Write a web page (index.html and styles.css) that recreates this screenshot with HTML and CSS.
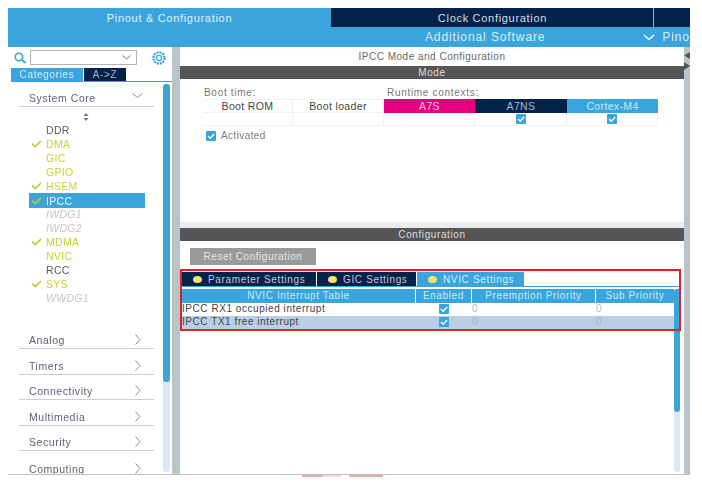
FILE: index.html
```html
<!DOCTYPE html>
<html lang="en">
<head>
<meta charset="utf-8">
<title>IPCC Mode and Configuration</title>
<link rel="stylesheet" href="styles.css">
</head>
<body>
<div class="app">
  <div class="tabs-top">
    <div class="top-tab active">Pinout &amp; Configuration</div>
    <div class="top-tab clock">Clock Configuration</div>
    <div class="top-tab spare"></div>
  </div>
  <div class="subbar">
    <div class="sub-title">Additional Software</div>
    <div class="sub-pinout">
      <svg class="sub-chev" width="12" height="7" viewBox="0 0 12 7"><path d="M1 1l5 4.5L11 1" fill="none" stroke="#f0f6fb" stroke-width="1.6"/></svg>
      <span>Pino</span>
    </div>
  </div>
  <div class="work">
    <aside class="side">
      <div class="search-row">
        <svg class="search-ico" width="13" height="12" viewBox="0 0 13 12"><circle cx="5" cy="5" r="3.7" fill="none" stroke="#39a5dc" stroke-width="1.6"/><path d="M8 8l3.6 3" stroke="#39a5dc" stroke-width="1.8"/></svg>
        <div class="search-input">
          <svg width="9" height="5" viewBox="0 0 9 5"><path d="M.5.5l4 3.5 4-3.5" fill="none" stroke="#777" stroke-width="1"/></svg>
        </div>
        <svg class="gear" width="16" height="16" viewBox="0 0 16 16"><circle cx="8" cy="8" r="5.6" fill="none" stroke="#39a5dc" stroke-width="2.4" stroke-dasharray="2 .9"/><circle cx="8" cy="8" r="2.6" fill="none" stroke="#39a5dc" stroke-width="1.2"/></svg>
      </div>
      <div class="side-tabs">
        <div class="side-tab on">Categories</div>
        <div class="side-tab off">A-&gt;Z</div>
      </div>
      <div class="side-body">
        <div class="side-list">
          <div class="cat open"><span>System Core</span><svg width="11" height="6" viewBox="0 0 11 6"><path d="M.5.5l5 4 5-4" fill="none" stroke="#8a8f96" stroke-width="1"/></svg></div>
          <div class="spin"><svg width="6" height="8" viewBox="0 0 6 8"><path d="M3 0l2.6 3H.4zM3 8L.4 5h5.2z" fill="#777"/></svg></div>
          <div class="item plain"><span class="tick"></span>DDR</div>
          <div class="item ok"><svg class="tick" width="11" height="8" viewBox="0 0 11 8"><path d="M1 3.5l3.2 3L10 1" fill="none" stroke="#b5d02c" stroke-width="1.7"/></svg>DMA</div>
          <div class="item ok"><span class="tick"></span>GIC</div>
          <div class="item ok"><span class="tick"></span>GPIO</div>
          <div class="item ok"><svg class="tick" width="11" height="8" viewBox="0 0 11 8"><path d="M1 3.5l3.2 3L10 1" fill="none" stroke="#b5d02c" stroke-width="1.7"/></svg>HSEM</div>
          <div class="item sel"><svg class="tick" width="11" height="8" viewBox="0 0 11 8"><path d="M1 3.5l3.2 3L10 1" fill="none" stroke="#b5d02c" stroke-width="1.7"/></svg>IPCC</div>
          <div class="item off"><span class="tick"></span>IWDG1</div>
          <div class="item off"><span class="tick"></span>IWDG2</div>
          <div class="item ok"><svg class="tick" width="11" height="8" viewBox="0 0 11 8"><path d="M1 3.5l3.2 3L10 1" fill="none" stroke="#b5d02c" stroke-width="1.7"/></svg>MDMA</div>
          <div class="item ok"><span class="tick"></span>NVIC</div>
          <div class="item plain"><span class="tick"></span>RCC</div>
          <div class="item ok"><svg class="tick" width="11" height="8" viewBox="0 0 11 8"><path d="M1 3.5l3.2 3L10 1" fill="none" stroke="#b5d02c" stroke-width="1.7"/></svg>SYS</div>
          <div class="item off"><span class="tick"></span>WWDG1</div>
          <div class="closed-group">
            <div class="cat"><span>Analog</span><svg width="6" height="11" viewBox="0 0 6 11"><path d="M.5.5l4.5 5-4.5 5" fill="none" stroke="#8a8f96" stroke-width="1"/></svg></div>
            <div class="cat"><span>Timers</span><svg width="6" height="11" viewBox="0 0 6 11"><path d="M.5.5l4.5 5-4.5 5" fill="none" stroke="#8a8f96" stroke-width="1"/></svg></div>
            <div class="cat"><span>Connectivity</span><svg width="6" height="11" viewBox="0 0 6 11"><path d="M.5.5l4.5 5-4.5 5" fill="none" stroke="#8a8f96" stroke-width="1"/></svg></div>
            <div class="cat"><span>Multimedia</span><svg width="6" height="11" viewBox="0 0 6 11"><path d="M.5.5l4.5 5-4.5 5" fill="none" stroke="#8a8f96" stroke-width="1"/></svg></div>
            <div class="cat"><span>Security</span><svg width="6" height="11" viewBox="0 0 6 11"><path d="M.5.5l4.5 5-4.5 5" fill="none" stroke="#8a8f96" stroke-width="1"/></svg></div>
            <div class="cat last"><span>Computing</span><svg width="6" height="11" viewBox="0 0 6 11"><path d="M.5.5l4.5 5-4.5 5" fill="none" stroke="#8a8f96" stroke-width="1"/></svg></div>
          </div>
        </div>
        <div class="scroll side-scroll"><div class="thumb"></div></div>
      </div>
    </aside>
    <div class="splitter"></div>
    <main class="main">
      <section class="mode-panel">
        <div class="panel-title">IPCC Mode and Configuration</div>
        <div class="band">Mode</div>
        <div class="mode-body">
          <div class="ctx-labels"><span class="boot-label">Boot time:</span><span>Runtime contexts:</span></div>
          <div class="ctx-table">
            <div class="ctx-cell head-plain">Boot ROM</div>
            <div class="ctx-cell head-plain">Boot loader</div>
            <div class="ctx-cell head-pink">A7S</div>
            <div class="ctx-cell head-navy">A7NS</div>
            <div class="ctx-cell head-blue">Cortex-M4</div>
            <div class="ctx-cell"></div>
            <div class="ctx-cell"></div>
            <div class="ctx-cell"></div>
            <div class="ctx-cell"><span class="cb"><svg width="10" height="10" viewBox="0 0 10 10"><path d="M2 5l2.2 2.2L8.2 3" fill="none" stroke="#fff" stroke-width="1.3"/></svg></span></div>
            <div class="ctx-cell"><span class="cb"><svg width="10" height="10" viewBox="0 0 10 10"><path d="M2 5l2.2 2.2L8.2 3" fill="none" stroke="#fff" stroke-width="1.3"/></svg></span></div>
          </div>
          <div class="activated"><span class="cb"><svg width="10" height="10" viewBox="0 0 10 10"><path d="M2 5l2.2 2.2L8.2 3" fill="none" stroke="#fff" stroke-width="1.3"/></svg></span>Activated</div>
        </div>
      </section>
      <div class="h-split"></div>
      <section class="config-panel">
        <div class="band">Configuration</div>
        <div class="reset-btn">Reset Configuration</div>
        <div class="cfg-tabs">
          <div class="cfg-tab w1"><span class="dot"></span>Parameter Settings</div>
          <div class="cfg-tab w2"><span class="dot"></span>GIC Settings</div>
          <div class="cfg-tab w3 on"><span class="dot"></span>NVIC Settings</div>
        </div>
        <div class="cfg-body">
          <div class="nvic">
            <div class="nv-row nv-head">
              <div>NVIC Interrupt Table</div><div>Enabled</div><div>Preemption Priority</div><div>Sub Priority</div>
            </div>
            <div class="nv-row nv-data">
              <div class="name">IPCC RX1 occupied interrupt</div>
              <div class="mid"><span class="cb"><svg width="10" height="10" viewBox="0 0 10 10"><path d="M2 5l2.2 2.2L8.2 3" fill="none" stroke="#fff" stroke-width="1.3"/></svg></span></div>
              <div class="num">0</div><div class="num">0</div>
            </div>
            <div class="nv-row nv-data alt">
              <div class="name">IPCC TX1 free interrupt</div>
              <div class="mid"><span class="cb"><svg width="10" height="10" viewBox="0 0 10 10"><path d="M2 5l2.2 2.2L8.2 3" fill="none" stroke="#fff" stroke-width="1.3"/></svg></span></div>
              <div class="num">0</div><div class="num">0</div>
            </div>
          </div>
          <div class="scroll cfg-scroll"><div class="thumb"></div></div>
        </div>
        <div class="red-box"></div>
      </section>
    </main>
    <div class="right-rail">
      <svg width="6" height="24" viewBox="0 0 6 24"><path d="M6 1v7L0 4.500zM0 11v8l6-4z" fill="#555"/></svg>
    </div>
  </div>
</div>
<div class="leftovers"><span class="lf a"></span><span class="lf b"></span><span class="lf c"></span></div>
</body>
</html>
```
FILE: styles.css
```css
* { box-sizing: border-box; }
html, body { margin: 0; background: #fff; }
body {
  padding: 8px 0 0 8px;
  width: 702px;
  height: 488px;
  overflow: hidden;
  font-family: "Liberation Sans", Arial, sans-serif;
  font-size: 10px;
  color: #555;
}
.app {
  width: 682px;
  height: 467px;
  display: flex;
  flex-direction: column;
  filter: blur(0.5px);
  border-bottom: 1px solid #b9c3ca;
}
.tabs-top { display: flex; height: 19px; background: #03234b; color: #d5dde6; font-size: 11px; letter-spacing: .7px; }
.top-tab { display: flex; align-items: center; justify-content: center; }
.top-tab.active { width: 323px; background: #39a5dc; color: #e4f1f9; }
.top-tab.clock { width: 322px; margin-left: 1px; border-right: 1px solid #9fb0c2; }
.top-tab.spare { flex: 1; }
.subbar {
  height: 20px;
  background: #39a5dc;
  display: flex;
  align-items: center;
  color: #d9edf8;
  font-size: 12px;
  letter-spacing: .9px;
}
.sub-title { width: 633px; padding-left: 322px; text-align: center; }
.sub-pinout { display: flex; align-items: center; flex: 1; white-space: nowrap; }
.sub-chev { flex: none; margin: 0 7px 0 3px; }
.work { flex: 1; display: flex; min-height: 0; }

.side { width: 164px; display: flex; flex-direction: column; background: #fff; }
.search-row { height: 21px; display: flex; align-items: center; padding-left: 6px; }
.search-ico { margin-right: 3px; }
.search-input {
  width: 107px; height: 15px; border: 1px solid #b5b5b5;
  display: flex; align-items: center; justify-content: flex-end; padding-right: 5px;
}
.gear { margin-left: 14px; }
.side-tabs { height: 14px; margin-left: 3px; display: flex; gap: 1px; border-bottom: 1px solid #39a5dc; font-size: 10px; letter-spacing: .65px; }
.side-tab { display: flex; align-items: center; justify-content: center; height: 13px; }
.side-tab.on { width: 72px; background: #39a5dc; color: #d9edf8; }
.side-tab.off { width: 42px; background: #03234b; color: #a9b6c6; }
.side-body { flex: 1; display: flex; min-height: 0; }
.side-list { width: 155px; overflow: hidden; }
.cat {
  margin-left: 11px; width: 135px; height: 25.5px;
  display: flex; justify-content: space-between; align-items: flex-end;
  padding: 0 13px 1px 10px; border-bottom: 1px solid #c9ced3;
  font-size: 10.500px; letter-spacing: .55px; color: #5a6272; line-height: 14px;
}
.cat.open { height: 25px; padding-right: 11px; }
.cat.open svg { margin-bottom: 6px; }
.cat svg { margin-bottom: 2px; }
.cat.last { border-bottom: 0; }
.spin { height: 16px; display: flex; align-items: flex-end; justify-content: center; padding-bottom: 2px; width: 156px; }
.item {
  height: 14px; margin-left: 21px; width: 116px; display: flex; align-items: center;
  font-size: 10.500px; letter-spacing: .3px; line-height: 14px;
}
.tick { display: block; width: 11px; margin: 0 4px 0 2px; flex: none; }
.item.plain { color: #5b5b5b; }
.item.ok { color: #c6d52e; }
.item.off { color: #c3c6cb; font-style: italic; }
.item.sel { background: #39a5dc; color: #f2f8fc; height: 15px; margin-bottom: -1px; }
.closed-group { margin-top: 18.500px; }

.scroll { background: #dce9f4; border-radius: 3px; flex: none; }
.scroll .thumb { background: #39a5dc; border-radius: 3px; width: 100%; }
.side-scroll { width: 7px; margin: 2px 2px 2px 0; }
.side-scroll .thumb { height: 298px; }
.splitter { width: 8px; background: #b9c3ca; flex: none; }

.main { width: 504px; display: flex; flex-direction: column; }
.mode-panel { height: 175px; background: #fff; }
.panel-title { height: 19px; display: flex; align-items: center; justify-content: center; font-size: 10px; letter-spacing: .5px; color: #666; }
.band { height: 13px; background: #555; color: #dcdcdc; display: flex; align-items: center; justify-content: center; font-size: 10px; letter-spacing: .6px; flex: none; }
.mode-body { padding: 7px 0 0 23px; }
.ctx-labels { display: flex; height: 13px; font-size: 10px; letter-spacing: .7px; color: #777; align-items: center; padding-left: 1px; }
.boot-label { width: 183px; }
.ctx-table { display: grid; grid-template-columns: 90px 91px 91px 92px 91px; width: 455px; }
.ctx-cell {
  height: 13.500px; display: flex; align-items: center; justify-content: center;
  border-right: 1px solid #eef0f2; border-bottom: 1px solid #eef0f2;
  font-size: 10.500px; letter-spacing: .35px; color: #444;
}
.head-plain { border-top: 1px solid #eef0f2; }
.head-pink { background: #e6007e; color: #f6c3de; border: 0; }
.head-navy { background: #03234b; color: #a9b6c6; border: 0; }
.head-blue { background: #39a5dc; color: #c9e5f4; border: 0; }
.cb {
  width: 10px; height: 10px; background: #39a5dc; border-radius: 1px; display: inline-block; flex: none;
}
.cb svg { display: block; }
.activated { display: flex; align-items: center; margin: 4px 0 0 3px; height: 11px; color: #777; font-size: 10px; letter-spacing: .4px; }
.activated .cb { margin-right: 5px; }
.h-split { height: 6px; background: #e9edf0; flex: none; }

.config-panel { flex: 1; background: #fff; position: relative; display: flex; flex-direction: column; padding-bottom: 2px; min-height: 0; }
.reset-btn {
  margin: 7px 0 7px 10px; width: 126px; height: 17px; background: #9a9a9a; color: #e6e6e6;
  display: flex; align-items: center; justify-content: center; font-size: 10px; letter-spacing: .55px; flex: none;
}
.cfg-tabs { display: flex; gap: 1px; margin: 0 4px 0 2px; height: 15px; border-bottom: 1px solid #39a5dc; flex: none; }
.cfg-tab {
  height: 14px; background: #03234b; color: #c3ccd7; display: flex; align-items: center;
  font-size: 10px; letter-spacing: .65px; padding-left: 11px; white-space: nowrap;
}
.cfg-tab.w1 { width: 134px; }
.cfg-tab.w2 { width: 99px; }
.cfg-tab.w3 { width: 107px; }
.cfg-tab.on { background: #39a5dc; color: #d9edf8; }
.dot { width: 9px; height: 7px; border-radius: 50%; background: #efe56a; margin-right: 6px; flex: none; }
.cfg-body { flex: 1; display: flex; margin: 2px 4px 0 2px; min-height: 0; }
.nvic { width: 492px; }
.nv-row { display: grid; grid-template-columns: 233px 55px 123px 78px; gap: 1px; align-items: stretch; }
.nv-head { height: 14px; background: #fff; font-size: 10px; letter-spacing: .6px; text-align: center; color: #cfe8f6; }
.nv-head > div { background: #39a5dc; line-height: 14px; }
.nv-data { height: 13px; font-size: 10px; letter-spacing: .55px; color: #444; background: #fff; }
.nv-data.alt { background: #b9cfe4; }
.nv-data > div { display: flex; align-items: center; padding-bottom: 2px; }
.nv-data .mid { justify-content: center; padding-bottom: 1px; }
.nv-data .num { color: #bbb; }
.nv-data.alt .num { color: #9fb4c6; }
.cfg-scroll { width: 6px; }
.cfg-scroll .thumb { height: 123px; }
.red-box { position: absolute; left: 0; top: 41px; width: 501px; height: 62px; border: 2px solid #e0202a; }

.right-rail { width: 6px; background: #b9c3ca; padding-top: 1px; flex: none; }
.right-rail svg { display: block; margin-top: 3px; }

.leftovers { display: flex; height: 2px; margin-left: 294px; }
.lf { display: block; height: 2px; }
.lf.a { width: 20px; background: #f0a79f; }
.lf.b { width: 19px; background: #f6dcd9; margin-right: 8px; }
.lf.c { width: 34px; background: #f0a79f; }
```
